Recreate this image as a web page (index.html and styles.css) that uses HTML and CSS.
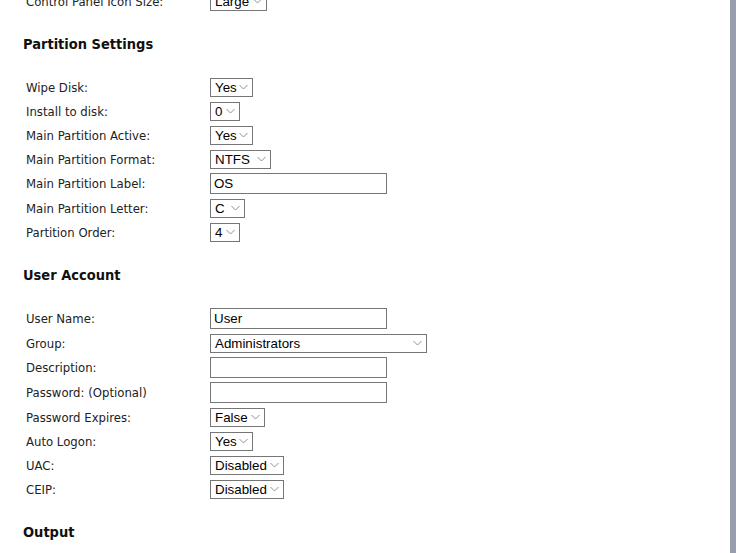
FILE: index.html
```html
<!DOCTYPE html>
<html lang="en">
<head>
  <meta charset="UTF-8">
  <meta name="viewport" content="width=device-width, initial-scale=1.0">
  <title>Unattend Settings</title>
  <link rel="stylesheet" href="styles.css">
</head>
<body>
  <div class="page">
    <table class="form">
      <tr class="sel-row">
        <td class="label">Control Panel Icon Size:</td>
        <td>
          <select class="w57">
            <option>Large</option>
            <option>Small</option>
          </select>
        </td>
      </tr>
    </table>

    <h2>Partition Settings</h2>
    <table class="form">
      <tr class="sel-row">
        <td class="label">Wipe Disk:</td>
        <td><select class="w43"><option>Yes</option><option>No</option></select></td>
      </tr>
      <tr class="sel-row">
        <td class="label">Install to disk:</td>
        <td><select class="w30"><option>0</option><option>1</option><option>2</option><option>3</option></select></td>
      </tr>
      <tr class="sel-row">
        <td class="label">Main Partition Active:</td>
        <td><select class="w43"><option>Yes</option><option>No</option></select></td>
      </tr>
      <tr class="sel-row">
        <td class="label">Main Partition Format:</td>
        <td><select class="w61"><option>NTFS</option><option>FAT32</option></select></td>
      </tr>
      <tr class="text-row">
        <td class="label">Main Partition Label:</td>
        <td><input type="text" value="OS"></td>
      </tr>
      <tr class="sel-row">
        <td class="label">Main Partition Letter:</td>
        <td><select class="w35"><option>C</option><option>D</option><option>E</option><option>F</option></select></td>
      </tr>
      <tr class="sel-row">
        <td class="label">Partition Order:</td>
        <td><select class="w30"><option>1</option><option>2</option><option>3</option><option selected>4</option></select></td>
      </tr>
    </table>

    <h2>User Account</h2>
    <table class="form">
      <tr class="text-row">
        <td class="label">User Name:</td>
        <td><input type="text" value="User"></td>
      </tr>
      <tr class="sel-row">
        <td class="label">Group:</td>
        <td><select class="w217"><option>Administrators</option><option>Users</option></select></td>
      </tr>
      <tr class="text-row">
        <td class="label">Description:</td>
        <td><input type="text"></td>
      </tr>
      <tr class="text-row">
        <td class="label">Password: (Optional)</td>
        <td><input type="password"></td>
      </tr>
      <tr class="sel-row">
        <td class="label">Password Expires:</td>
        <td><select class="w55"><option>False</option><option>True</option></select></td>
      </tr>
      <tr class="sel-row">
        <td class="label">Auto Logon:</td>
        <td><select class="w43"><option>Yes</option><option>No</option></select></td>
      </tr>
      <tr class="sel-row">
        <td class="label">UAC:</td>
        <td><select class="w74"><option>Disabled</option><option>Enabled</option></select></td>
      </tr>
      <tr class="sel-row">
        <td class="label">CEIP:</td>
        <td><select class="w74"><option>Disabled</option><option>Enabled</option></select></td>
      </tr>
    </table>

    <h2>Output</h2>
  </div>
  <div class="scroll-edge"></div>
</body>
</html>
```

FILE: styles.css
```css
html {
  overflow: hidden;
}

body {
  margin: 0;
  font-family: "DejaVu Sans Condensed", "DejaVu Sans", sans-serif;
  font-stretch: condensed;
  font-size: 13px;
  color: #222;
  background-color: #fff;
}

.page {
  margin-top: -12px;
  padding-left: 23px;
}

h2 {
  margin: 21px 0;
  font-size: 14.5px;
  line-height: 18px;
  font-weight: bold;
  color: #111;
}

.form {
  border-collapse: separate;
  border-spacing: 2px;
  margin: 0;
}

.form td {
  padding: 0 1px;
  vertical-align: middle;
}

.sel-row {
  height: 22px;
}

.text-row {
  height: 23px;
}

.label {
  width: 180px;
}

select,
input {
  display: block;
  box-sizing: border-box;
  margin: 0;
  font-family: "Liberation Sans", Arial, sans-serif;
  font-size: 13.33px;
  color: #000;
  background-color: #fff;
  border: 1px solid #767676;
  border-radius: 0;
}

select {
  -webkit-appearance: none;
  appearance: none;
  height: 19px;
  padding: 0 0 0 4px;
  line-height: 17px;
  background-image: url("data:image/svg+xml,%3Csvg xmlns='http://www.w3.org/2000/svg' width='9' height='6'%3E%3Cpath d='M0.5 1l4 4 4-4' fill='none' stroke='%23909090'/%3E%3C/svg%3E");
  background-repeat: no-repeat;
  background-position: right 4px center;
}

input {
  width: 177px;
  height: 21px;
  padding: 0 3px;
}

.w30 { width: 30px; }
.w35 { width: 35px; }
.w43 { width: 43px; }
.w55 { width: 55px; }
.w57 { width: 57px; }
.w61 { width: 61px; }
.w74 { width: 74px; }
.w217 { width: 217px; }

.scroll-edge {
  position: fixed;
  top: 0;
  right: 0;
  bottom: 0;
  width: 6px;
  background-color: #999eae;
}
```
